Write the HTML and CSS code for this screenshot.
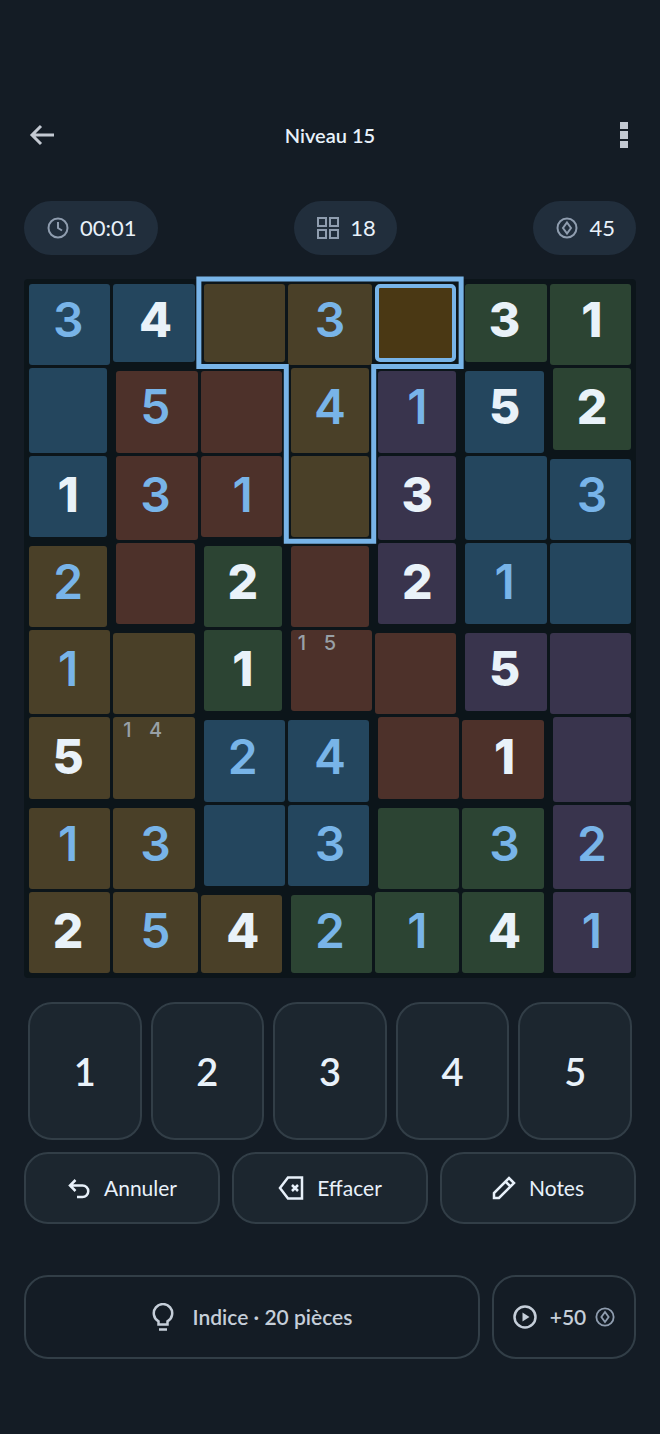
FILE: index.html
```html
<!DOCTYPE html>
<html lang="fr">
<head>
    <meta charset="UTF-8">
    <meta name="viewport" content="width=device-width, initial-scale=1.0">
    <title>Niveau 15</title>
    <link rel="stylesheet" href="styles.css">
</head>
<body>
    <header class="topbar">
        <button class="icon-btn" aria-label="Retour">
            <svg width="26" height="22" viewBox="0 0 26 22"><path d="M12 2 3 11l9 9M3 11h22"/></svg>
        </button>
        <h1>Niveau 15</h1>
        <button class="icon-btn menu" aria-label="Menu">
            <svg width="8" height="26" viewBox="0 0 8 26"><path d="M0 0h8v7H0zM0 9h8v8H0zM0 19h8v7H0z"/></svg>
        </button>
    </header>

    <div class="stats">
        <div class="pill">
            <svg width="22" height="22" viewBox="0 0 22 22"><circle cx="11" cy="11" r="9.5"/><path d="M11 5v6l4 2.5"/></svg>
            <span>00:01</span>
        </div>
        <div class="pill">
            <svg width="22" height="22" viewBox="0 0 22 22"><path d="M1 1h8v8H1zM13 1h8v8h-8zM1 13h8v8H1zM13 13h8v8h-8z"/></svg>
            <span>18</span>
        </div>
        <div class="pill">
            <svg width="22" height="22" viewBox="0 0 22 22"><circle cx="11" cy="11" r="9.5"/><path d="m11 5.500 4 5.500-4 5.500-4-5.500z"/></svg>
            <span>45</span>
        </div>
    </div>

    <main>
        <div class="board" id="board">
            <svg class="outline" viewBox="0 0 7 8" preserveAspectRatio="none">
                <path d="M2 0H5V1H4V3H3V1H2Z" vector-effect="non-scaling-stroke"/>
            </svg>
        </div>

        <div class="keypad">
            <button>1</button>
            <button>2</button>
            <button>3</button>
            <button>4</button>
            <button>5</button>
        </div>

        <div class="actions">
            <button>
                <svg width="24" height="24" viewBox="0 0 24 24"><path d="M8.500 4 3 9.500l5.500 5.500M3 9.500h12.500a5.700 5.700 0 0 1 0 11.500H10"/></svg>
                <span>Annuler</span>
            </button>
            <button>
                <svg width="26" height="24" viewBox="0 0 26 24"><path d="M10 1.500h14v21H10L2 12zM14 9l6 6M20 9l-6 6"/></svg>
                <span>Effacer</span>
            </button>
            <button>
                <svg width="24" height="24" viewBox="0 0 24 24"><path d="M2 22v-5L17 2l5 5L7 22zM13.500 5.500l5 5"/></svg>
                <span>Notes</span>
            </button>
        </div>
    </main>

    <footer class="bonus">
        <button class="hint">
            <svg width="22" height="28" viewBox="0 0 22 28"><path d="M6.500 21.500v-3.200a9.200 9.200 0 1 1 9 0v3.200zM7 26.500h8"/></svg>
            <span>Indice · 20 pièces</span>
        </button>
        <button class="reward">
            <svg width="24" height="24" viewBox="0 0 24 24"><circle cx="12" cy="12" r="10.500"/><path class="solid" d="M9.500 7.500v9l7-4.500z"/></svg>
            <span>+50</span>
            <svg class="coin" width="20" height="20" viewBox="0 0 22 22"><circle cx="11" cy="11" r="9.500"/><path d="m11 5.500 4 5.500-4 5.500-4-5.500z"/></svg>
        </button>
    </footer>

    <script src="board.js"></script>
</body>
</html>
```
FILE: styles.css
```css
* {
    box-sizing: border-box;
}
body {
    margin: 0;
    padding: 105px 24px 72px;
    background-color: #141c25;
    color: #e8f1fa;
    font-family: Lato, sans-serif;
    font-size: 22px;
}
button {
    font: inherit;
    color: inherit;
    padding: 0;
    cursor: pointer;
}
svg {
    fill: none;
    stroke: currentColor;
    stroke-width: 2;
    flex: none;
}

/* Header */
.topbar {
    display: flex;
    align-items: center;
    justify-content: space-between;
    height: 60px;
}
.topbar h1 {
    margin: 0;
    font-size: 20px;
    font-weight: 600;
}
.icon-btn {
    display: flex;
    align-items: center;
    width: 48px;
    height: 48px;
    padding: 0 5px;
    border: none;
    background: none;
    color: #c3c9d2;
}
.icon-btn svg {
    stroke-width: 3;
}
.icon-btn.menu {
    justify-content: flex-end;
    padding: 0 8px;
}
.menu svg {
    fill: currentColor;
    stroke: none;
}

/* Timer, empty cells, coins */
.stats {
    display: flex;
    justify-content: space-between;
    margin-top: 36px;
}
.pill {
    display: flex;
    align-items: center;
    gap: 11px;
    height: 54px;
    padding: 0 21px 0 23px;
    border-radius: 27px;
    background-color: #212e3c;
}
.pill svg {
    color: #8f9daf;
}
.pill span,
.actions span,
.bonus span {
    padding-bottom: 2px;
}

/* Board */
.board {
    position: relative;
    display: grid;
    grid-template-columns: repeat(7, 1fr);
    gap: 3px;
    margin-top: 24px;
    padding: 2px;
    border-radius: 4px;
    background-color: #0c151a;
}
.cell {
    position: relative;
    z-index: 0;
    display: flex;
    align-items: center;
    justify-content: center;
    aspect-ratio: 1;
    padding-bottom: 6px;
    border: none;
    background: none;
    font-family: Inter, sans-serif;
    font-size: 48px;
    font-weight: 600;
    line-height: 1;
    color: #78b4e8;
}
.cell.given {
    font-weight: 800;
    color: #e9f2f9;
}
.cell::before {
    content: "";
    position: absolute;
    inset: 0;
    z-index: -1;
    border-radius: 3px;
    background-color: var(--tile);
}
/* a wall pulls the tile back from a neighbouring region */
.wall-top::before { top: 3px; }
.wall-right::before { right: 3px; }
.wall-bottom::before { bottom: 3px; }
.wall-left::before { left: 3px; }

.blue { --tile: #24465e; }
.olive { --tile: #4a4028; }
.green { --tile: #2c4433; }
.red { --tile: #4d312a; }
.purple { --tile: #39344d; }

.cell.selected::before {
    border: 4px solid #78b4e8;
    border-radius: 5px;
    background-color: #4a3814;
}
.cell.noted {
    display: grid;
    grid-template: repeat(3, 1fr) / repeat(3, 1fr);
    align-items: center;
    justify-items: center;
    padding-bottom: 8px;
    font-size: 20px;
    font-weight: 500;
    color: #98a0a6;
}
.outline {
    position: absolute;
    inset: 0;
    z-index: 1;
    width: 100%;
    height: 100%;
    overflow: visible;
    pointer-events: none;
    stroke: #78b4e8;
    stroke-width: 5;
}

/* Number keys */
.keypad {
    display: grid;
    grid-template-columns: repeat(5, 1fr);
    gap: 9px;
    margin: 24px 4px 0;
}
.keypad button,
.actions button,
.bonus button {
    border: 2px solid #323e47;
    border-radius: 24px;
    background-color: #1c262f;
}
.keypad button {
    height: 138px;
    font-size: 38px;
    font-weight: 600;
}

/* Undo, erase, notes */
.actions {
    display: grid;
    grid-template-columns: repeat(3, 1fr);
    gap: 12px;
    margin-top: 12px;
}
.actions button,
.bonus button {
    display: flex;
    align-items: center;
    justify-content: center;
    gap: 13px;
    height: 72px;
}
.actions button {
    font-size: 21px;
}
.actions svg,
.bonus svg {
    stroke-width: 2.5;
}

/* Hint and reward */
.bonus {
    display: flex;
    gap: 12px;
    margin-top: 51px;
}
.bonus button {
    height: 84px;
    background: none;
    color: #c5ced9;
    font-size: 21px;
    font-weight: 600;
}
.bonus .hint {
    flex: 1;
    gap: 19px;
}
.bonus .reward {
    width: 144px;
}
.bonus .coin {
    margin-left: -4px;
    color: #8f9daf;
    stroke-width: 2;
}
.bonus .solid {
    fill: currentColor;
    stroke: none;
}
```
FILE: board.js
```javascript
// One letter per region
const regions = [
    'aabbbcc',
    'addbefc',
    'addbeff',
    'gdhieff',
    'gghiijj',
    'ggkkiij',
    'llkkmmj',
    'lllmmmj'
];

const colors = {
    a: 'blue', b: 'olive', c: 'green', d: 'red', e: 'purple', f: 'blue', g: 'olive',
    h: 'green', i: 'red', j: 'purple', k: 'blue', l: 'olive', m: 'green'
};

// "!" marks a given digit, "." an empty cell, "n" pencil notes
const values = [
    '3 4! . 3 . 3! 1!',
    '. 5 . 4 1 5! 2!',
    '1! 3 1 . 3! . 3',
    '2 . 2! . 2! 1 .',
    '1 . 1! n15 . 5! .',
    '5! n14 2 4 . 1! .',
    '1 3 . 3 . 3 2',
    '2! 5 4! 2 1 4! 1'
];

const selected = { row: 0, col: 4 };
const board = document.getElementById('board');

function regionAt(row, col) {
    return regions[row] ? regions[row][col] : undefined;
}

values.forEach((line, row) => {
    line.split(' ').forEach((value, col) => {
        const cell = document.createElement('button');
        const region = regionAt(row, col);
        cell.className = 'cell ' + colors[region];

        if (regionAt(row - 1, col) !== region) cell.classList.add('wall-top');
        if (regionAt(row, col + 1) !== region) cell.classList.add('wall-right');
        if (regionAt(row + 1, col) !== region) cell.classList.add('wall-bottom');
        if (regionAt(row, col - 1) !== region) cell.classList.add('wall-left');
        if (row === selected.row && col === selected.col) cell.classList.add('selected');

        if (value[0] === 'n') {
            cell.classList.add('noted');
            for (const digit of value.slice(1)) {
                const note = document.createElement('span');
                note.textContent = digit;
                cell.appendChild(note);
            }
        } else if (value !== '.') {
            cell.textContent = value[0];
            if (value[1] === '!') cell.classList.add('given');
        }

        board.appendChild(cell);
    });
});
```
